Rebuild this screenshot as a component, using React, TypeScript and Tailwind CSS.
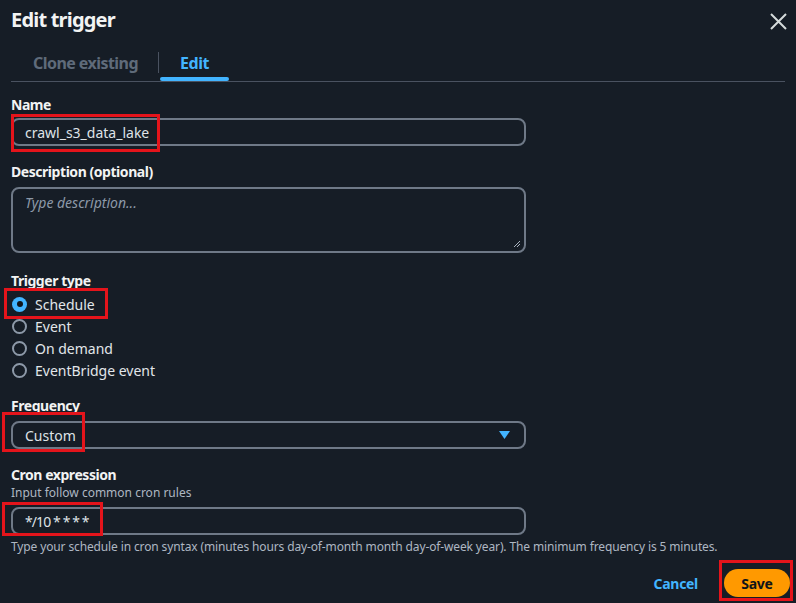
import React from "react";

const font = { fontFamily: '"Noto Sans", "Open Sans", sans-serif' };

const Radio = ({ label, checked }: { label: string; checked?: boolean }) => (
  <div className="flex h-[22px] items-center">
    {checked ? (
      <span className="ml-[1px] flex h-[15px] w-[15px] items-center justify-center rounded-full bg-[#42b4ff]">
        <span className="h-[6px] w-[6px] rounded-full bg-[#0f141a]" />
      </span>
    ) : (
      <span className="ml-[1px] h-[15px] w-[15px] rounded-full border-2 border-[#8d99a8]" />
    )}
    <span className="ml-[8px] text-[14px] text-[#e2e6ea]">{label}</span>
  </div>
);

const Label = ({ children, className = "" }: { children: React.ReactNode; className?: string }) => (
  <div className={`h-[20px] text-[14px] leading-[20px] font-bold tracking-[-0.45px] text-[#f2f3f3] ${className}`}>
    {children}
  </div>
);

const Field = ({ children }: { children: React.ReactNode }) => (
  <div className="flex h-[28px] w-[515px] items-center rounded-[8px] border-2 border-[#6f7987] pl-[12px] pr-[14px] text-[14px] text-[#dfe3e8]">
    {children}
  </div>
);

const Mark = ({ className }: { className: string }) => (
  <div className={`pointer-events-none absolute border-[3px] border-[#e4141b] ${className}`} />
);

export default function App() {
  return (
    <div className="relative h-[603px] w-[796px] overflow-hidden bg-[#161d26]" style={font}>
      {/* Header */}
      <div className="flex h-[44px] items-start justify-between pl-[11px] pr-[9px] pt-[6px]">
        <h2 className="text-[20px] leading-[28px] font-bold tracking-[-0.8px] text-[#f2f3f3]">Edit trigger</h2>
        <svg className="mt-[7px]" width="17" height="17" viewBox="0 0 17 17" fill="none">
          <path d="M1 1L16 16M16 1L1 16" stroke="#d5dbdb" strokeWidth="2" />
        </svg>
      </div>

      {/* Tabs */}
      <div className="mx-[11px] flex h-[38px] items-end border-b border-[#4a5260]">
        <div className="flex h-[38px] w-[147px] items-center pl-[22px] pt-[1px]">
          <span className="text-[16px] font-bold tracking-[-0.55px] text-[#5f6b7a]">Clone existing</span>
        </div>
        <div className="mb-[8px] h-[21px] w-px self-end bg-[#4a5260]" />
        <div className="relative ml-[1px] flex h-[38px] w-[69px] items-center justify-center pt-[1px]">
          <span className="text-[16px] font-bold tracking-[-0.4px] text-[#42b4ff]">Edit</span>
          <span className="absolute bottom-0 left-0 right-0 h-[4px] rounded-full bg-[#42b4ff]" />
        </div>
      </div>

      <div className="px-[11px]">
        <Label className="mt-[13px]">Name</Label>
        <div className="mt-[3px]">
          <Field>crawl_s3_data_lake</Field>
        </div>

        <Label className="mt-[16px]">Description (optional)</Label>
        <div className="relative mt-[5px] h-[66px] w-[515px] rounded-[8px] border-2 border-[#6f7987] pl-[12px] pt-[3px] text-[14px] italic text-[#8d99a8]">
          Type description...
          <svg className="absolute bottom-[3px] right-[3px]" width="8" height="8" viewBox="0 0 8 8">
            <path d="M7 1L1 7M7 4L4 7" stroke="#aab4c0" strokeWidth="1" />
          </svg>
        </div>

        <Label className="mt-[18px]">Trigger type</Label>
        <div className="mt-[2px]">
          <Radio label="Schedule" checked />
          <Radio label="Event" />
          <Radio label="On demand" />
          <Radio label="EventBridge event" />
        </div>

        <Label className="mt-[15px]">Frequency</Label>
        <div className="mt-[5px]">
          <Field>
            <span className="flex-1">Custom</span>
            <svg width="11" height="8" viewBox="0 0 11 8">
              <path d="M0 0H11L5.5 8Z" fill="#42b4ff" />
            </svg>
          </Field>
        </div>

        <Label className="mt-[16px]">Cron expression</Label>
        <div className="h-[16px] text-[12px] leading-[16px] text-[#aeb7c2]">Input follow common cron rules</div>
        <div className="mt-[6px]">
          <Field>
            <span className="tracking-[-0.9px]">*/10 * * * *</span>
          </Field>
        </div>
        <div className="mt-[4px] h-[16px] text-[12px] leading-[16px] tracking-[-0.13px] text-[#aeb7c2]">
          Type your schedule in cron syntax (minutes hours day-of-month month day-of-week year). The minimum frequency is 5 minutes.
        </div>

        {/* Footer */}
        <div className="mt-[14px] flex items-center justify-end">
          <button className="mr-[26px] text-[14px] font-bold tracking-[-0.3px] text-[#42b4ff]">Cancel</button>
          <button className="mr-[-5px] h-[28px] w-[66px] rounded-full bg-[#ff9900] text-[14px] font-bold tracking-[-0.3px] text-[#0f141a]">
            Save
          </button>
        </div>
      </div>

      {/* Annotations */}
      <Mark className="left-[11px] top-[114px] h-[38px] w-[149px]" />
      <Mark className="left-[4px] top-[288px] h-[31px] w-[104px]" />
      <Mark className="left-[2px] top-[412px] h-[40px] w-[83px]" />
      <Mark className="left-[2px] top-[502px] h-[34px] w-[101px]" />
      <Mark className="left-[719px] top-[560px] h-[41px] w-[74px]" />
    </div>
  );
}
